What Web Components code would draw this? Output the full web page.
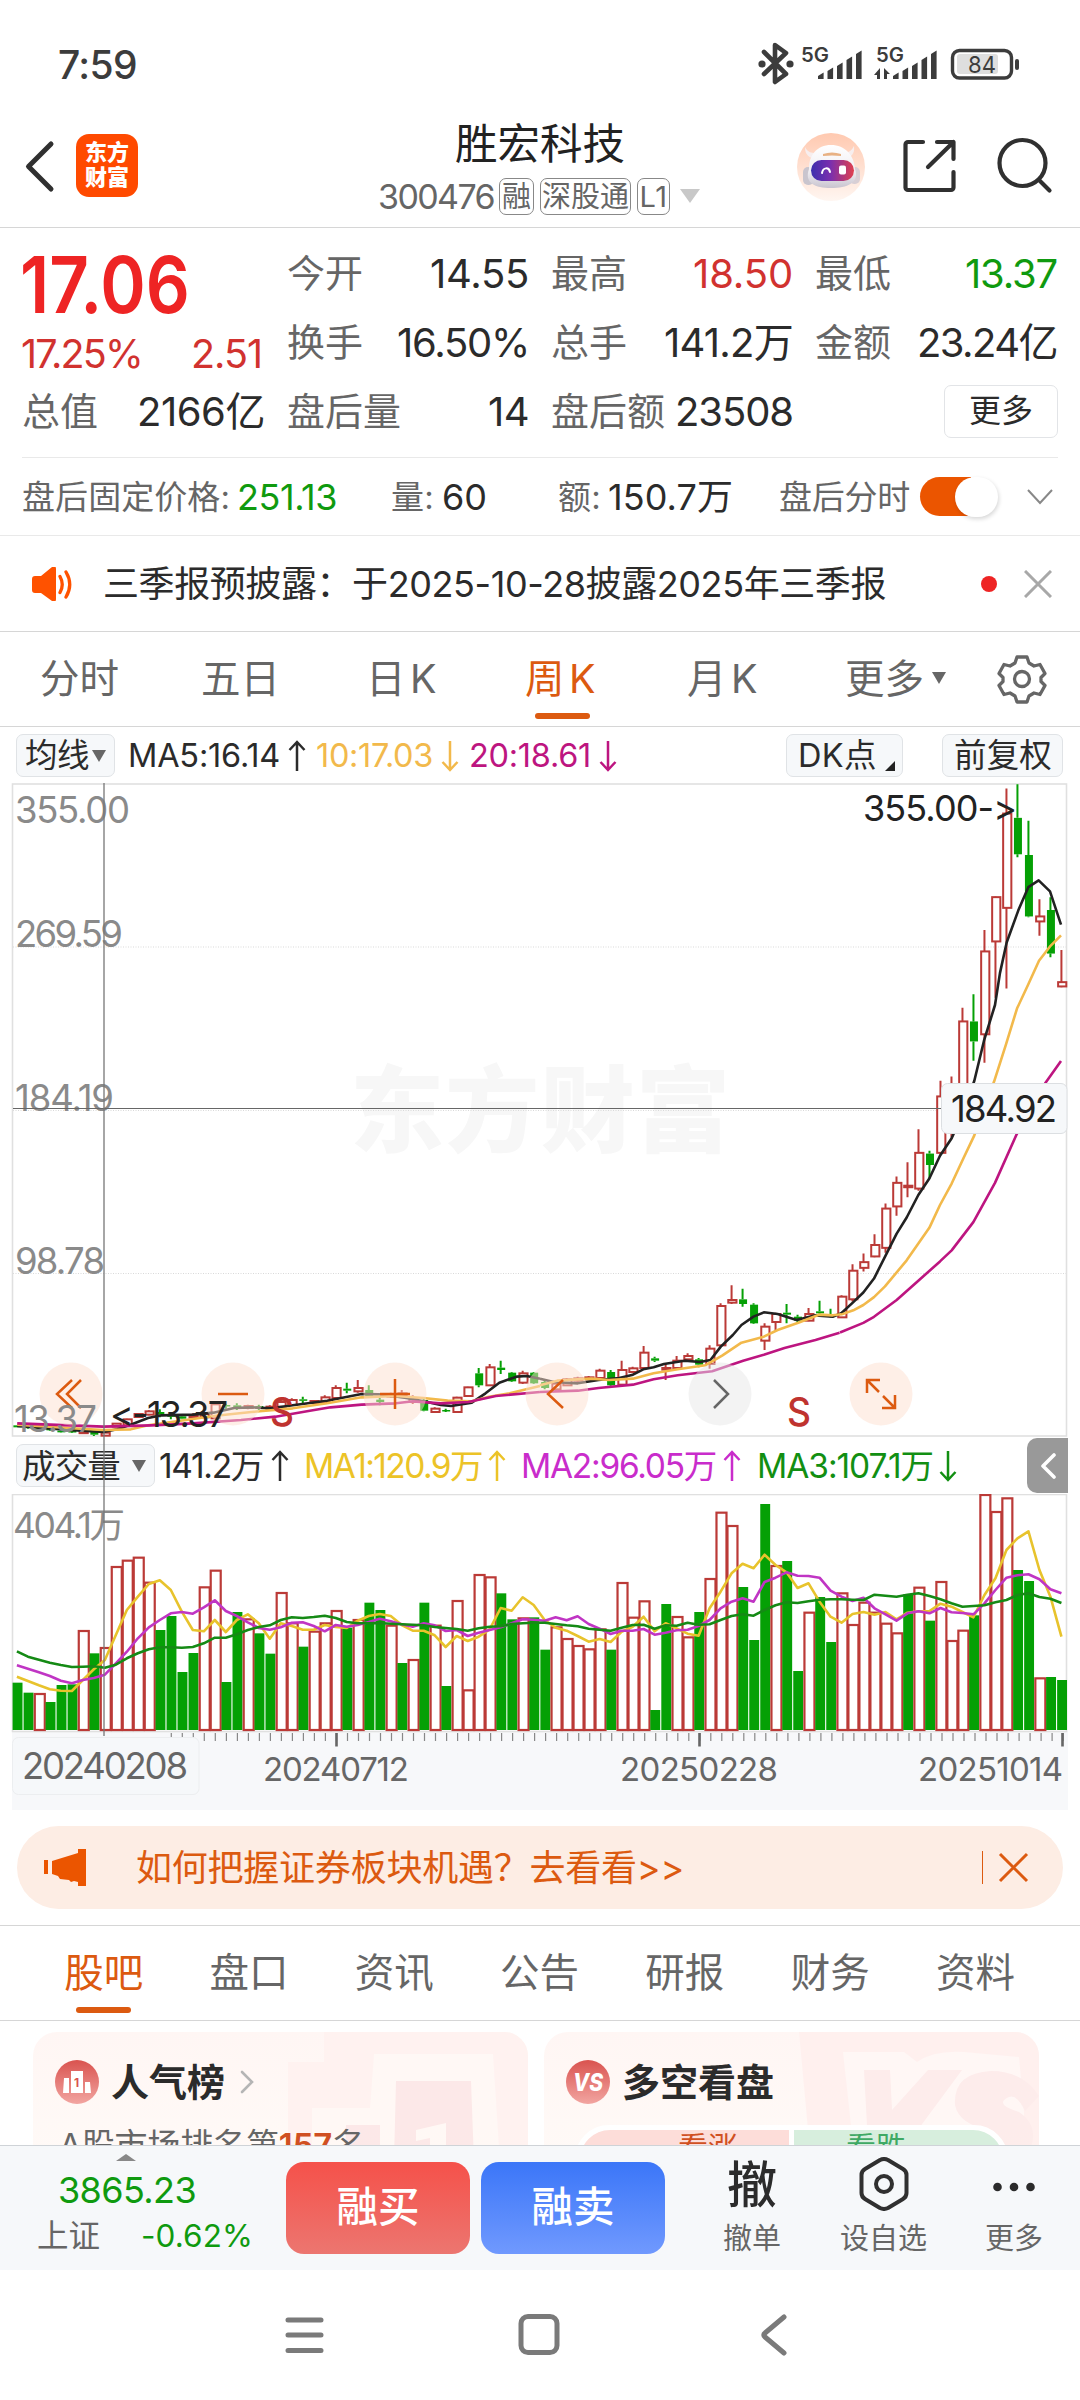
<!DOCTYPE html>
<html lang="zh-CN">
<head>
<meta charset="utf-8">
<title>胜宏科技 300476</title>
<style>
    body {
        margin: 0;
        width: 1080px;
        height: 2400px;
        overflow: hidden;
        background: #fff;
        color: #2b2b2b;
        font-family: Inter, "Noto Sans CJK SC", sans-serif;
    }
</style>
</head>
<body>
<stock-app></stock-app>

<script>
// Shared base: renders the template of a class into its shadow root
class BaseElement extends HTMLElement {
    constructor() {
        super();
        this.attachShadow({ mode: 'open' });
    }

    connectedCallback() {
        this.shadowRoot.innerHTML = `<style>
            * { box-sizing: border-box; }
            svg { display: block; flex: none; }
            ${this.styles()}
        </style>${this.render()}`;
    }

    styles() { return ''; }
    render() { return ''; }
}

class StatusBar extends BaseElement {
    styles() {
        return `
            :host { display: flex; justify-content: space-between; height: 105px; padding: 0 60px 0 58px; color: #3c3c3c; }
            .time { font-size: 39px; line-height: 129px; font-weight: 500; }
            svg { margin-top: 35px; }
        `;
    }

    bars(x) {
        return [6, 11, 16, 22, 28].map((h, i) =>
            `<path d="M${x + i * 9.5} 44V${44 - h + 3}l5.6-3.4V44z"/>`).join('');
    }

    render() {
        return `
            <fit-text class="time" w="79">7:59</fit-text>
            <svg width="266" height="54" viewBox="754 35 266 54" fill="#3c3c3c">
                <path d="M764 52l22 22-11 8V45l11 8-22 21" fill="none" stroke="#3c3c3c" stroke-width="4.6" stroke-linejoin="round" stroke-linecap="round"/>
                <circle cx="762" cy="64" r="3.6"/><circle cx="790" cy="64" r="3.6"/>
                <text x="801" y="62" font-size="20" font-weight="600" textLength="28" lengthAdjust="spacingAndGlyphs">5G</text>
                <g transform="translate(0 35)">${this.bars(818)}${this.bars(893)}</g>
                <text x="876" y="62" font-size="20" font-weight="600" textLength="28" lengthAdjust="spacingAndGlyphs">5G</text>
                <path d="M880 68v11h-3v-4h-3zM884 79V68l6 6h-3v5z"/>
                <rect x="952.5" y="50.500" width="59" height="27.500" rx="7" fill="none" stroke="#3c3c3c" stroke-width="3.4"/>
                <rect x="957" y="54" width="41" height="20" rx="3" fill="#dedede"/>
                <rect x="1015" y="59" width="4" height="11" rx="2"/>
                <text x="968" y="73" font-size="23.5" textLength="28" lengthAdjust="spacingAndGlyphs">84</text>
            </svg>
        `;
    }
}

class NavHeader extends BaseElement {
    styles() {
        return `
            :host { display: flex; height: 123px; border-bottom: 1px solid #d6d6d6; }
            .back { margin: 32px 0 0 20px; }
            .logo {
                width: 62px; height: 63px; margin: 29px 0 0 16px; padding-top: 6px;
                border-radius: 13px; background: #ff4a00; color: #fff;
                font-size: 22px; line-height: 25px; font-weight: 900; text-align: center;
            }
            .title { width: 330px; margin-left: 232px; padding-top: 14px; }
            .name { display: block; margin-left: 85px; font-size: 42.500px; line-height: 50px; color: #222; }
            .meta { display: flex; align-items: center; margin-top: 7px; padding-left: 8px; height: 40px; color: #666; font-size: 34px; }
            .chip { display: flex; justify-content: center; height: 37px; border: 1.5px solid #888; border-radius: 7px; font-size: 29px; line-height: 35px; margin-left: 6px; }
            .tri { margin-left: 10px; border: 10px solid transparent; border-top: 14px solid #c8c8c8; border-bottom: 0; }
            .bot { margin: 27px 0 0 96px; }
            .share { margin: 32px 0 0 35px; }
            .find { margin: 32px 0 0 34px; }
        `;
    }

    render() {
        return `
            <svg class="back" width="40" height="56" viewBox="20 137 40 56" fill="none" stroke="#303030" stroke-width="5" stroke-linecap="round" stroke-linejoin="round"><path d="M51 144L28.500 166.500 51 189"/></svg>
            <div class="logo">东方<br>财富</div>
            <div class="title">
                <span class="name">胜宏科技</span>
                <div class="meta">
                    <fit-text w="116">300476</fit-text>
                    <span class="chip" style="width:35px;margin-left:5px">融</span>
                    <span class="chip" style="width:91px">深股通</span>
                    <span class="chip" style="width:33px"><fit-text w="28">L1</fit-text></span>
                    <i class="tri"></i>
                </div>
            </div>
            <svg class="bot" width="70" height="70" viewBox="0 0 70 70">
                <defs>
                    <linearGradient id="sky" x2="0" y2="1"><stop stop-color="#ffc9b0"/><stop offset="1" stop-color="#fff6f1"/></linearGradient>
                    <linearGradient id="visor"><stop stop-color="#3c2fae"/><stop offset=".45" stop-color="#7a2fae"/><stop offset="1" stop-color="#e0404e"/></linearGradient>
                    <linearGradient id="helmet" x2="0" y2="1"><stop stop-color="#fff"/><stop offset=".6" stop-color="#f0eef2"/><stop offset="1" stop-color="#c9c4cf"/></linearGradient>
                </defs>
                <circle cx="35" cy="35" r="34" fill="url(#sky)"/>
                <path d="M9 15c0 8 4 10 9 12l5-7c-6 2-11 1-14-5zM58 14c1 8-3 11-8 13l-5-7c6 2 10 0 13-6z" fill="#f7eeee"/>
                <rect x="7" y="35" width="11" height="18" rx="5" fill="#c9c5ce"/><rect x="53" y="35" width="11" height="17" rx="5" fill="#d8cfd5"/>
                <path d="M13 37c0-14 8-24 22-24s23 10 24 24c5 14-8 19-24 19s-27-5-22-19z" fill="url(#helmet)"/>
                <path d="M27 22q9-3 18 0v2q-9-1-18 0z" fill="#e8b183"/>
                <rect x="15" y="28" width="43" height="21" rx="10.500" fill="url(#visor)"/>
                <path d="M26 41c1-6 7-6 8-1" stroke="#fff" stroke-width="2" fill="none" stroke-linecap="round"/>
                <rect x="43" y="33.500" width="7" height="9" rx="2" fill="#fff"/>
            </svg>
            <svg class="share" width="60" height="60" viewBox="901 137 60 60" fill="none" stroke="#303030" stroke-width="4.2" stroke-linecap="round" stroke-linejoin="round">
                <path d="M923 142h-15a2.500 2.500 0 0 0-2.500 2.500v43a2.500 2.500 0 0 0 2.500 2.500h43a2.500 2.500 0 0 0 2.500-2.500V172M937 142h16.500v17M953.500 142L928 167"/>
            </svg>
            <svg class="find" width="60" height="60" viewBox="995 137 60 60" fill="none" stroke="#303030" stroke-width="4.2" stroke-linecap="round"><circle cx="1022.500" cy="163" r="23"/><path d="M1040 181l9.500 9.500"/></svg>
        `;
    }
}

// One label / value pair of the quote grid
class QuoteCell extends BaseElement {
    styles() {
        return `
            :host { display: flex; justify-content: space-between; height: 69px; font-size: 38px; line-height: 69px; color: #666; white-space: nowrap; }
            span { margin-left: -2px; }
            fit-text { font-size: 40px; color: ${this.getAttribute('color') || '#2b2b2b'}; }
        `;
    }

    render() {
        return `<span>${this.getAttribute('label')}</span><fit-text w="${this.getAttribute('w')}">${this.getAttribute('value')}</fit-text>`;
    }
}

class QuotePanel extends BaseElement {
    styles() {
        return `
            :host { display: block; height: 308px; border-bottom: 1px solid #e9e9e9; }
            .grid { display: flex; justify-content: space-between; height: 230px; margin: 0 22px; padding: 11px 1px 0 2px; border-bottom: 1px solid #e9e9e9; }
            .col { width: 240px; }
            .lead { width: 241px; }
            .price { display: block; height: 90px; margin-left: -4px; color: #ee2424; font-size: 79px; line-height: 90px; font-weight: 600; }
            .change { display: flex; justify-content: space-between; height: 48px; margin: 0 3px 0 -3px; color: #d1322f; font-size: 39.500px; line-height: 50px; }
            .more { width: 114px; height: 53px; margin: 8px -1px 0 auto; border: 1px solid #e2e4e7; border-radius: 7px; font-size: 32px; line-height: 50px; text-align: center; color: #2b2b2b; }
            .after { display: flex; height: 77px; align-items: center; padding: 0 26px 0 22px; font-size: 33px; line-height: 50px; color: #666; white-space: nowrap; }
            .after .num { font-size: 36px; color: #2b2b2b; }
            .switch { width: 78px; height: 39px; margin: 0 29px 0 10px; border-radius: 20px; background: linear-gradient(90deg, #eb5500 65%, #fff 66%); }
            .switch i { display: block; width: 43px; height: 40px; margin-left: 35px; border-radius: 20px; background: #fff; box-shadow: 1px 2px 4px rgba(0, 0, 0, .16); }
        `;
    }

    render() {
        return `
            <div class="grid">
                <div class="lead">
                    <fit-text class="price" w="170" squeeze>17.06</fit-text>
                    <div class="change"><fit-text w="121">17.25%</fit-text><fit-text w="71">2.51</fit-text></div>
                    <quote-cell label="总值" value="2166亿" w="128"></quote-cell>
                </div>
                <div class="col">
                    <quote-cell label="今开" value="14.55" w="99"></quote-cell>
                    <quote-cell label="换手" value="16.50%" w="132"></quote-cell>
                    <quote-cell label="盘后量" value="14" w="41"></quote-cell>
                </div>
                <div class="col">
                    <quote-cell label="最高" value="18.50" w="100" color="#d1322f"></quote-cell>
                    <quote-cell label="总手" value="141.2万" w="129"></quote-cell>
                    <quote-cell label="盘后额" value="23508" w="118"></quote-cell>
                </div>
                <div class="col">
                    <quote-cell label="最低" value="13.37" w="92" color="#0f9a0f"></quote-cell>
                    <quote-cell label="金额" value="23.24亿" w="140"></quote-cell>
                    <div class="more">更多</div>
                </div>
            </div>
            <div class="after">
                <fit-text w="208">盘后固定价格:</fit-text>
                <fit-text class="num" w="100" style="margin-left:7px;color:#0f9a0f">251.13</fit-text>
                <fit-text w="43" style="margin-left:54px">量:</fit-text>
                <fit-text class="num" w="45" style="margin-left:8px">60</fit-text>
                <fit-text w="43" style="margin-left:71px">额:</fit-text>
                <fit-text class="num" w="125" style="margin-left:7px">150.7万</fit-text>
                <fit-text w="131" style="margin-left:46px">盘后分时</fit-text>
                <div class="switch"><i></i></div>
                <svg width="26" height="20" viewBox="0 0 26 20" fill="none" stroke="#888" stroke-width="2"><path d="M1 3l12 13L25 3"/></svg>
            </div>
        `;
    }
}

class NoticeBar extends BaseElement {
    styles() {
        return `
            :host { display: flex; align-items: center; height: 96px; border-bottom: 1px solid #d6d6d6; padding: 0 28px 0 31px; font-size: 36px; line-height: 60px; color: #2b2b2b; }
            .dot { width: 16px; height: 16px; border-radius: 50%; background: #ee2424; margin: 0 27px 0 95px; }
        `;
    }

    render() {
        return `
            <svg width="42" height="34" viewBox="31 566 42 34">
                <path d="M32 578q0-3 3-3h6l11-9q4-2 4 2v30q0 4-4 2l-11-8h-6q-3 0-3-3z" fill="#ff5200"/>
                <path d="M60 575.500q4.500 8 0 16M66 571q7.500 12.500 0 25" fill="none" stroke="#ff5200" stroke-width="3.300" stroke-linecap="round"/>
            </svg>
            <fit-text w="783" style="margin-left:30px">三季报预披露：于2025-10-28披露2025年三季报</fit-text>
            <i class="dot"></i>
            <svg width="28" height="28" viewBox="0 0 28 28" stroke="#a8a8a8" stroke-width="3"><path d="M1 1l26 26M27 1L1 27"/></svg>
        `;
    }
}

class TabItem extends BaseElement {
    styles() {
        const on = this.hasAttribute('active');
        return `
            :host { display: flex; flex-direction: column; align-items: center; width: var(--tab-width, auto); height: 94px; font-size: 39.500px; line-height: 95px; color: ${on ? '#dc5a10' : '#666'}; white-space: nowrap; }
            i { display: ${on ? 'block' : 'none'}; width: 55px; height: 6px; margin-top: -14px; border-radius: 3px; background: #dc5a10; }
        `;
    }

    render() { return '<span><slot></slot></span><i></i>'; }
}

class PeriodTabs extends BaseElement {
    styles() {
        return `
            :host { display: flex; height: 95px; border-bottom: 1px solid #d6d6d6; padding-left: 40px; }
            .caret { margin-top: 40px; border: 7px solid transparent; border-top: 12px solid #666; border-bottom: 0; }
        `;
    }

    render() {
        return `
            <tab-item>分时</tab-item>
            <tab-item style="margin-left:82px">五日</tab-item>
            <tab-item style="margin-left:86px"><fit-text w="75">日K</fit-text></tab-item>
            <tab-item style="margin-left:84px" active><fit-text w="75">周K</fit-text></tab-item>
            <tab-item style="margin-left:87px"><fit-text w="75">月K</fit-text></tab-item>
            <tab-item style="margin-left:83px">更多</tab-item>
            <i class="caret" style="margin-left:8px"></i>
            <svg style="margin:22px 0 0 50px" width="52" height="50" viewBox="-26 -25 52 50" fill="none" stroke="#666" stroke-width="3.300" stroke-linejoin="round">
                <path d="M-5-22h10l2 6 5 3 6-1.500 5 9-4 4v4l4 4-5 9-6-1.500-5 3-2 6h-10l-2-6-5-3-6 1.500-5-9 4-4v-4l-4-4 5-9 6 1.500 5-3z"/><circle r="7.500"/>
            </svg>
        `;
    }
}

class IndicatorBar extends BaseElement {
    styles() {
        return `
            :host { display: flex; align-items: center; height: 56px; padding: 1px 17px 0 16px; font-size: 32.500px; line-height: 40px; white-space: nowrap; }
            .btn { display: flex; align-items: center; height: 43px; border: 1.500px solid #e0e3e6; border-radius: 7px; background: #f6f8fa; }
            .caret { margin-left: 3px; border: 7px solid transparent; border-top: 12px solid #666; border-bottom: 0; }
            .corner { align-self: flex-end; margin: 0 0 5px 8px; border: 5.500px solid #222; border-top-color: transparent; border-left-color: transparent; }
        `;
    }

    render() {
        return `
            <div class="btn" style="width:99px;padding-left:8px"><fit-text w="64">均线</fit-text><i class="caret"></i></div>
            <fit-text w="152" style="margin-left:13px">MA5:16.14</fit-text><arrow-mark></arrow-mark>
            <fit-text w="117" style="margin-left:10px;color:#f2b94b">10:17.03</fit-text><arrow-mark down style="color:#f2b94b"></arrow-mark>
            <fit-text w="122" style="margin-left:10px;color:#bd1580">20:18.61</fit-text><arrow-mark down style="color:#bd1580"></arrow-mark>
            <div class="btn" style="width:117px;margin-left:auto;padding-left:11px"><fit-text w="79">DK点</fit-text><i class="corner"></i></div>
            <div class="btn" style="width:121px;margin-left:39px;padding-left:11px"><fit-text w="98">前复权</fit-text></div>
        `;
    }
}

class ArrowMark extends BaseElement {
    styles() {
        return `:host { display: inline-block; margin-left: 8px; } svg { transform: ${this.hasAttribute('down') ? 'scaleY(-1)' : 'none'}; }`;
    }

    render() {
        return '<svg width="18" height="32" viewBox="0 0 18 32" fill="none" stroke="currentColor" stroke-width="2.500"><path d="M9 31V2M1.500 10L9 2l7.500 8"/></svg>';
    }
}

const RED = '#bb3a37';
const GREEN = '#05a005';
const PITCH = 10.995;
const barX = i => 17.4 + i * PITCH;

// [high, top, bottom, low] of each body, in steps of its own range; negative high marks a fall
const LOW_CANDLES = [
    [-436,436,442,442],[-440,440,444,446],[-444,444,448,448],[-446,446,451,453],[-452,452,457,458],[-452,453,457,459],[455,455,458,460],[-454,456,464,468],
    [450,458,467,467],[429,431,440,441],[416,418,436,438],[400,402,411,412],[391,394,404,406],[-388,396,404,412],[-400,406,410,418],[-404,409,416,418],
    [400,408,412,414],[396,402,412,414],[368,373,415,416],[-372,375,379,386],[-370,376,384,390],[374,378,384,388],[-374,378,387,390],[376,380,386,388],
    [360,366,380,384],[355,360,375,378],[-350,358,362,370],[360,363,369,371],[346,352,366,372],[316,324,354,358],[-308,326,332,340],[300,324,334,338],
    [-316,330,350,352],[-354,359,366,376],[338,342,350,354],[330,340,346,354],[346,354,366,372],[-354,360,392,394],[382,386,396,398],[-386,390,393,396],
    [350,353,396,398],[320,322,348,350],[-264,280,316,322],[252,262,316,318],[-242,263,270,282],[-276,278,304,306],[272,280,308,312],[-276,278,310,312],
    [-300,306,324,328],[306,311,328,332],[294,298,316,318],[290,295,302,305],[288,292,298,300],[266,272,294,298],[-270,276,316,318],[242,270,314,318],
    [260,265,276,280],[198,218,264,268],[-230,235,242,246],[250,264,269,300],[228,242,264,268],[220,228,238,242],[-234,238,254,262],[196,206,252,266],
    [70,78,196,198],[16,60,68,72],[-26,58,72,80],[-70,74,130,132],[130,140,182,210],[98,102,126,152],[-72,98,104,130],[-104,110,122,126],
    [84,102,122,124],[-62,94,100,106],[-86,103,108,112],[46,50,112,114],
];
const HIGH_CANDLES = [
    [1356,1374,1454,1460],[1326,1350,1366,1376],[1272,1302,1334,1336],[1186,1200,1310,1324],[1110,1128,1194,1220],[1070,1136,1138,1168],[978,1044,1144,1150],
    [-1038,1046,1078,1116],[842,886,1044,1048],[830,860,940,1000],[638,676,860,862],[-600,676,732,786],[420,480,712,792],[326,328,452,610],
    [24,94,358,584],[-12,106,208,216],[-114,210,382,384],[334,382,396,436],[-328,364,486,496],[476,566,578,580],
];

class PriceChart extends BaseElement {
    styles() {
        return `
            :host { display: block; height: 654px; }
            .line path { fill: none; stroke-width: 2.600; stroke-linejoin: round; vector-effect: non-scaling-stroke; }
            .axis { font-size: 36.500px; fill: #8a8a8a; }
            .mark { font-size: 36px; fill: #222; font-feature-settings: "calt" 0; }
        `;
    }

    candle([high, top, bottom, low], i, offset, step) {
        const up = high >= 0;
        const y = v => offset + Math.abs(v) * step;
        const x = barX(i);
        const color = up ? RED : GREEN;
        const wick = `<path d="M${x - .5} ${y(high)}V${y(top)}M${x - .5} ${y(bottom)}V${y(low)}" stroke="${color}" stroke-width="2"/>`;
        const height = Math.max(y(bottom) - y(top), 1.5);
        return wick + (up
            ? `<rect x="${x - 3.8}" y="${y(top)}" width="8.200" height="${height}" fill="#fff" stroke="${color}" stroke-width="2"/>`
            : `<rect x="${x - 4}" y="${y(top)}" width="8" height="${height}" fill="${color}"/>`);
    }

    // Each average is drawn in three stretches, left to right
    average(color, left, middle, right) {
        return `<g class="line" stroke="${color}">
            <path transform="translate(0 1280) scale(.34435 .33333)" d="M${left}"/>
            <path transform="translate(540 1280) scale(.34435 .33333)" d="M${middle}"/>
            <path transform="translate(640 780) scale(.33333 .35714)" d="M${right}"/>
        </g>`;
    }

    button(x, icon, gray) {
        return `<g transform="translate(${x} 1394)"><circle r="31.500" fill="${gray ? '#e8e8e8' : '#fde0d0'}" opacity=".5"/>
            <path d="${icon}" fill="none" stroke="${gray ? '#666' : '#dc5a10'}" stroke-width="2.500"/></g>`;
    }

    render() {
        return `
            <svg width="1080" height="654" viewBox="0 783 1080 654">
                <text x="350" y="1145" font-size="94" font-weight="900" fill="#f7f7f7" textLength="380">东方财富</text>
                <path d="M13 947h1054M13 1110.500h1054M13 1273.500h1054" stroke="#d9d9d9" stroke-dasharray="1 1.500"/>
                <rect x="12.500" y="784" width="1054" height="652" fill="none" stroke="#e0e0e0" stroke-width="1.600"/>
                ${LOW_CANDLES.map((c, i) => this.candle(c, i, 1280, 1 / 3)).join('')}
                ${HIGH_CANDLES.map((c, i) => this.candle(c, i + 76, 780, 1 / 2.8)).join('')}
                ${this.average('#222',
                    '50 438 200 450 300 456 340 448 385 432 430 414 470 406 560 404 620 398 680 384 730 382 790 385 850 376 950 362 1050 342 1100 343 1180 354 1230 364 1280 375 1310 378 1370 368 1410 340 1450 308 1500 290 1530 288 1568 296',
                    '0 296 40 306 110 310 170 300 230 294 270 284 300 268 330 262 360 252 420 242 465 246 495 240 525 200 560 165 585 135 620 110 650 97 690 102 745 120 800 106 850 110 875 100',
                    '603 1494 640 1462 670 1435 702 1396 770 1270 800 1225 835 1162 868 1116 900 1052 935 1003 970 930 1003 842 1032 730 1065 630 1080 540 1100 455 1135 365 1165 300 1196 281 1230 312 1263 405')}
                ${this.average('#f2b94b',
                    '50 434 200 444 300 450 380 448 430 436 540 420 620 408 730 396 850 385 950 370 1050 352 1150 348 1230 354 1300 362 1370 364 1420 350 1480 340 1568 318',
                    '0 316 50 302 110 298 150 296 200 300 270 296 330 280 400 268 480 256 530 226 585 188 650 170 690 150 750 128 810 104 850 106 875 103',
                    '603 1497 640 1485 670 1470 702 1448 735 1418 800 1345 868 1254 900 1190 935 1130 970 1060 1003 995 1062 845 1098 740 1131 640 1165 572 1197 506 1230 466 1263 435')}
                ${this.average('#bd1580',
                    '50 430 300 440 440 436 560 430 700 420 800 410 900 392 960 382 1050 374 1150 370 1200 364 1280 370 1360 366 1440 348 1568 336',
                    '0 336 110 332 170 324 270 314 330 298 400 286 500 274 590 242 650 224 710 204 800 180 870 158',
                    '600 1547 670 1520 702 1503 770 1456 835 1402 900 1348 935 1317 1000 1238 1065 1128 1130 992 1215 850 1263 787')}
                ${this.button(71, 'M1-14L-14 0L1 14M10-14L-4 0L10 14')}
                ${this.button(233, 'M-15 0H15')}
                ${this.button(395, 'M-15 0H15M0-15V15')}
                ${this.button(557, 'M6-14L-9 0L6 14')}
                ${this.button(720, 'M-6-14L8 0L-6 14', true)}
                ${this.button(881, 'M-14-1V-14H-1M-14-14L-2-2M14 1V14H1M14 14L2 2')}
                <g class="axis">
                    <text x="15" y="823" textLength="115">355.00</text>
                    <text x="15" y="946.500" textLength="108">269.59</text>
                    <text x="15" y="1110.500" textLength="99">184.19</text>
                    <text x="15" y="1273.500" textLength="90">98.78</text>
                    <text x="14" y="1432" textLength="83">13.37</text>
                </g>
                <g class="mark">
                    <text x="110" y="1427" textLength="118">&lt;-13.37</text>
                    <text x="863" y="820.500" textLength="154">355.00-&gt;</text>
                </g>
                <g fill="#bf332f" font-size="39" font-weight="500">
                    <text x="270" y="1426" textLength="24" lengthAdjust="spacingAndGlyphs">S</text>
                    <text x="787" y="1426" textLength="24" lengthAdjust="spacingAndGlyphs">S</text>
                </g>
                <path d="M13 1108.500H942" stroke="#666" stroke-width="1.200"/>
                <rect x="941.500" y="1083.500" width="125.500" height="50" rx="6" fill="#f6f8fa" stroke="#dcdfe2"/>
                <text x="951" y="1122" font-size="36.500" fill="#222" textLength="106">184.92</text>
            </svg>
        `;
    }
}

class VolumeBar extends BaseElement {
    styles() {
        return `
            :host { display: flex; align-items: center; height: 57px; padding-left: 16px; font-size: 33.500px; line-height: 42px; white-space: nowrap; }
            .btn { display: flex; align-items: center; width: 139px; height: 43px; padding-left: 5px; border: 1.500px solid #e0e3e6; border-radius: 7px; background: #f6f8fa; }
            .caret { margin-left: 12px; border: 7px solid transparent; border-top: 12px solid #666; border-bottom: 0; }
            .fold { display: flex; align-items: center; justify-content: center; width: 41px; height: 55px; margin: 0 12px 0 auto; border-radius: 10px 0 0 10px; background: #999; }
        `;
    }

    render() {
        return `
            <div class="btn"><fit-text w="98">成交量</fit-text><i class="caret"></i></div>
            <fit-text w="104" style="margin-left:4px">141.2万</fit-text><arrow-mark></arrow-mark>
            <fit-text w="178" style="margin-left:15px;color:#ecc327">MA1:120.9万</fit-text><arrow-mark style="margin-left:6px;color:#ecc327"></arrow-mark>
            <fit-text w="195" style="margin-left:15px;color:#c92ccb">MA2:96.05万</fit-text><arrow-mark style="margin-left:7px;color:#c92ccb"></arrow-mark>
            <fit-text w="176" style="margin-left:16px;color:#128f12">MA3:107.1万</fit-text><arrow-mark down style="margin-left:6px;color:#128f12"></arrow-mark>
            <div class="fold"><svg width="16" height="26" viewBox="0 0 16 26" fill="none" stroke="#fff" stroke-width="3.600" stroke-linecap="round" stroke-linejoin="round"><path d="M14 2L3 13l11 11"/></svg></div>
        `;
    }
}

// Tops of the volume columns in thirds of a pixel; negative marks a falling week
const VOLUME = [
    -1208,-1238,1242,-1266,-1215,-1213,1053,-1120,1104,861,842,833,908,-1050,-1008,-1176,-1119,922,872,-1206,-996,1018,-1060,-1121,
    939,1030,-1100,1055,1030,993,-1043,1020,-968,-990,1037,-1149,1140,-968,1037,-1218,963,1231,885,892,-940,-1018,1015,-1012,
    -1109,1042,1077,1098,1108,1048,-1109,909,1013,964,-1290,-972,1011,1072,-996,897,698,738,-921,-1080,-672,858,-843,-1173,
    998,-951,-1086,940,1035,968,998,1031,1060,-943,923,-1022,906,1083,1052,-1006,645,696,655,-870,-903,1195,-1191,-1200,
];
const VOLUME_MA1 = [
    1190,1203,1216,1228,1232,1233,1200,1168,1140,1065,990,950,912,901,930,995,1050,1054,1020,1056,1020,1003,1030,1076,
    1030,1038,1049,1049,1035,1041,1044,1022,1008,1002,1008,1035,1052,1052,1066,1101,1068,1083,1070,1048,984,992,952,975,
    1020,1043,1052,1068,1085,1077,1086,1055,1040,1010,1054,1030,1045,1061,1067,985,935,880,851,865,824,855,877,924,
    910,965,1010,1028,1002,996,1004,996,1018,998,994,993,971,980,996,1012,945,895,810,775,754,870,950,1070,
];
const VOLUME_MA2 = [
    1156,1166,1177,1188,1202,1210,1200,1194,1184,1150,1115,1075,1042,1020,1000,996,1001,982,961,993,1008,1027,1044,1049,
    1042,1028,1027,1038,1054,1035,1040,1035,1026,1016,1024,1033,1040,1030,1036,1053,1050,1068,1058,1050,1042,1030,1018,1019,
    1022,1012,1021,1009,1032,1046,1062,1052,1052,1047,1064,1058,1051,1049,1038,1020,985,965,955,965,906,893,877,887,
    888,893,932,950,963,953,985,1003,1022,1000,994,1000,984,997,999,1003,970,930,893,886,883,898,928,940,
];
const VOLUME_MA3 = [
    1114,1130,1139,1148,1155,1161,1160,1159,1163,1154,1135,1120,1108,1102,1102,1103,1101,1090,1073,1073,1063,1050,1041,1036,
    1020,1012,1014,1011,1007,1014,1026,1030,1030,1029,1031,1033,1034,1036,1041,1044,1047,1052,1045,1040,1039,1032,1030,1028,
    1028,1032,1036,1039,1046,1049,1052,1043,1035,1034,1046,1036,1037,1028,1034,1033,1020,1008,1003,1007,990,976,967,969,
    964,959,958,958,959,960,944,947,950,944,940,948,958,970,980,978,976,967,960,945,940,951,956,969,
];

class VolumeChart extends BaseElement {
    styles() {
        return ':host { display: block; height: 316px; }';
    }

    column(v, i) {
        const y = 1280 + Math.abs(v) / 3;
        const x = barX(i);
        return v < 0
            ? `<rect x="${x - 4.8}" y="${y}" width="9.900" height="${1730 - y}" fill="${GREEN}"/>`
            : `<rect x="${x - 4.6}" y="${y}" width="10" height="${1730 - y}" fill="#fff" stroke="${RED}" stroke-width="2.200"/>`;
    }

    average(values, color) {
        const points = values.map((v, i) => `${barX(i) - .5},${(1280 + v / 3).toFixed(1)}`).join(' ');
        return `<polyline points="${points}" fill="none" stroke="${color}" stroke-width="2.600" stroke-linejoin="round"/>`;
    }

    ticks() {
        let d = '';
        for (let i = 14; i < 96; i++) d += `M${(171.3 + (i - 14) * 11.01).toFixed(1)} 1733v8`;
        return d;
    }

    render() {
        return `
            <svg width="1080" height="316" viewBox="0 1494 1080 316">
                <rect x="12" y="1731" width="1056" height="79" fill="#f7f8fa"/>
                <rect x="12.500" y="1494.500" width="1054" height="237" fill="none" stroke="#e0e0e0" stroke-width="1.600"/>
                <text x="13" y="1538" font-size="35.500" fill="#8a8a8a" textLength="112">404.1万</text>
                ${VOLUME.map((v, i) => this.column(v, i)).join('')}
                ${this.average(VOLUME_MA1, '#e8c32c')}
                ${this.average(VOLUME_MA2, '#c035c4')}
                ${this.average(VOLUME_MA3, '#158a15')}
                <path d="${this.ticks()}" stroke="#888" stroke-width="1.200"/>
                <path d="M336.500 1733v13.500M699.500 1733v13.500M1062.500 1733v13.500" stroke="#666" stroke-width="2.600"/>
                <rect x="12.500" y="1737.500" width="186.500" height="57" rx="6" fill="#f6f8fa" stroke="#eceef0"/>
                <text x="22" y="1779" font-size="36.500" fill="#666" textLength="166">20240208</text>
                <g font-size="33" fill="#666">
                    <text x="263" y="1780.500" textLength="146">20240712</text>
                    <text x="620" y="1780.500" textLength="158">20250228</text>
                    <text x="918" y="1780.500" textLength="145">20251014</text>
                </g>
            </svg>
        `;
    }
}

class ChartArea extends BaseElement {
    // The crosshair runs over all the rows of the chart
    styles() {
        return `
            :host { display: block; position: relative; }
            .cross { position: absolute; left: 103px; top: 0; width: 2px; height: 953px; background: #777; opacity: .65; }
        `;
    }

    render() {
        return '<price-chart></price-chart><volume-bar></volume-bar><volume-chart></volume-chart><i class="cross"></i>';
    }
}

class PromoBanner extends BaseElement {
    styles() {
        return `
            :host { display: flex; align-items: center; height: 83px; margin: 16px 17px; padding: 0 34px 0 27px; border-radius: 42px; background: #fdede4; font-size: 36px; line-height: 60px; color: #dc5a10; white-space: nowrap; }
            .rule { width: 1px; height: 33px; margin: 0 15px 0 auto; background: #dc5a10; }
        `;
    }

    render() {
        return `
            <svg width="44" height="37" viewBox="44 1849 44 37" fill="#eb5500"><path d="M44 1860h4v14h-4zM52 1861l26-8v-4h8v37h-8v-4l-4-1-3 1-2-2-9-1-2-3-6-2z"/></svg>
            <fit-text w="548" style="margin-left:48px">如何把握证券板块机遇？去看看&gt;&gt;</fit-text>
            <i class="rule"></i>
            <svg width="31" height="31" viewBox="0 0 31 31" stroke="#dc5a10" stroke-width="3"><path d="M2 2l27 27M29 2L2 29"/></svg>
        `;
    }
}

class SectionTabs extends BaseElement {
    styles() {
        return `
            :host { display: flex; height: 96px; border-top: 1px solid #d6d6d6; border-bottom: 1px solid #d6d6d6; padding-left: 31px; }
            tab-item { --tab-width: 145.300px; }
        `;
    }

    render() {
        return ['股吧', '盘口', '资讯', '公告', '研报', '财务', '资料']
            .map((t, i) => `<tab-item ${i ? '' : 'active'}>${t}</tab-item>`).join('');
    }
}

class InfoCard extends BaseElement {
    styles() {
        return `
            :host { display: block; position: relative; width: 495px; height: 130px; border-radius: 24px 24px 0 0; background: linear-gradient(#fff6f4, #fffaf7); overflow: hidden; }
            .art { position: absolute; right: 0; top: 0; opacity: .85; }
            .head { position: relative; display: flex; align-items: center; padding: 28px 0 0 22px; height: 72px; font-size: 38px; font-weight: 600; color: #2b2b2b; }
            .head span { margin-left: 12px; line-height: 44px; }
            .head svg:last-child { margin-left: 15px; }
            .body { position: relative; }
        `;
    }

    render() {
        const vs = this.hasAttribute('versus');
        const art = vs
            ? '<path d="M0 0H240V130H12z" fill="#ffefed"/><path d="M44 20H105L118 30Q135 18 165 20L220 25L225 80V130H56z" fill="#fff7f5"/><path d="M65 38h26l2 40 36-40h34l-68 92H70zM240 64q-16-25-48-25-38 2-36 34 4 20 36 25 16 8 2 32h30q22-32-4-50-26-8-10-15 8-3 16 14z" fill="#fdeae9"/>'
            : '<path d="M36 0H240V130H-10V30H36z" fill="#fff1ef"/><path d="M86 22H205L212 130H24V76H82z" fill="#fff8f5"/><path d="M108 49h75l3 81h-80zM58 93h34v37H57z" fill="#fce6e5"/><path d="M128 98l30-7v39h-16v-24l-14 3z" fill="#fff8f5"/>';
        const badge = vs
            ? '<text x="7" y="31" font-size="24" font-weight="800" font-style="italic" fill="#fff" textLength="30" lengthAdjust="spacingAndGlyphs">VS</text>'
            : '<path d="M9 18h5v15H8zM16 11h12v22H16zM30 22h5l1 11h-6z" fill="#fff"/><text x="19" y="27" font-size="12" font-weight="700" fill="#d9534f">1</text>';
        return `
            <svg class="art" width="240" height="130" viewBox="0 0 240 130">${art}</svg>
            <div class="head">
                <svg width="44" height="44" viewBox="0 0 44 44">
                    <defs><linearGradient id="g" x2="0" y2="1"><stop stop-color="#d9534f"/><stop offset="1" stop-color="#f2a5a1"/></linearGradient></defs>
                    <circle cx="22" cy="22" r="22" fill="url(#g)"/>${badge}
                </svg>
                <span>${this.getAttribute('heading')}</span>
                ${vs ? '' : '<svg width="14" height="24" viewBox="0 0 14 24" fill="none" stroke="#b5b5b5" stroke-width="2.600" stroke-linecap="round"><path d="M2 2l10 10L2 22"/></svg>'}
            </div>
            <div class="body"><slot></slot></div>
        `;
    }
}

class VoteBar extends BaseElement {
    styles() {
        return `
            :host { display: flex; gap: 5px; width: 433px; height: 60px; margin: 21px 0 0 31px; border: 5px solid #fff; border-radius: 34px 34px 0 0; background: #fff; font-size: 30px; }
            div { flex: 1; display: flex; align-items: center; height: 55px; line-height: 44px; }
            .up { padding-left: 18px; border-radius: 30px 0 0 0; background: #fdddd9; color: #d05022; }
            .down { justify-content: flex-end; padding-right: 18px; border-radius: 0 30px 0 0; background: #d7eedd; color: #3fa964; }
            i { width: 44px; height: 44px; margin-top: 18px; border-radius: 50%; background: #fff; }
            .up span { margin: -22px 0 0 36px; }
            .down span { margin: -22px 35px 0 0; }
        `;
    }

    render() {
        return '<div class="up"><i></i><span>看涨</span></div><div class="down"><span>看跌</span><i></i></div>';
    }
}

class CardRow extends BaseElement {
    styles() {
        return `
            :host { display: flex; gap: 16px; height: 124px; padding: 11px 0 0 33px; overflow: hidden; }
            .rank { margin: 16px 0 0 26px; font-size: 33px; line-height: 50px; color: #666; white-space: nowrap; }
            b { color: #d05022; font-weight: 600; }
        `;
    }

    render() {
        return `
            <info-card heading="人气榜"><div class="rank"><fit-text w="306">A股市场排名第<b>157</b>名</fit-text></div></info-card>
            <info-card heading="多空看盘" versus><vote-bar></vote-bar></info-card>
        `;
    }
}

class TradeBar extends BaseElement {
    styles() {
        return `
            :host { display: flex; height: 125px; border-top: 1px solid #cfd3d7; background: #f6f8fa; white-space: nowrap; }
            .index { width: 232px; margin-left: 37px; color: #0f9a0f; }
            .tri { display: block; width: 0; margin: 8px 0 0 79px; border: 10px solid transparent; border-top: 0; border-bottom: 7px solid #888; }
            .value { display: block; margin-left: 21px; font-size: 36px; line-height: 58px; height: 53px; }
            .row { display: flex; justify-content: space-between; width: 216px; font-size: 31.500px; line-height: 44px; }
            .row span { color: #666; }
            .btn { width: 184px; height: 92px; margin: 16px 0 0 17px; border-radius: 18px; color: #fff; font-size: 41.500px; line-height: 90px; font-weight: 500; text-align: center; background: linear-gradient(#f5514a, #ec7670); }
            .sell { margin-left: 11px; background: linear-gradient(#3b76f8, #7099fe); }
            .act { display: flex; flex-direction: column; align-items: center; justify-content: flex-end; padding-bottom: 11px; font-size: 29px; line-height: 40px; color: #666; }
            .act svg { margin-bottom: 8px; }
            .big { color: #2b2b2b; font-size: 50px; line-height: 58px; font-weight: 500; margin-bottom: 5px; }
        `;
    }

    render() {
        return `
            <div class="index">
                <i class="tri"></i>
                <fit-text class="value" w="138">3865.23</fit-text>
                <div class="row"><span>上证</span><fit-text w="112">-0.62%</fit-text></div>
            </div>
            <div class="btn">融买</div>
            <div class="btn sell">融卖</div>
            <div class="act" style="margin-left:58px"><span class="big">撤</span>撤单</div>
            <div class="act" style="margin-left:59px">
                <svg width="50" height="54" viewBox="-25 -27 50 54" fill="none" stroke="#303030" stroke-width="4" stroke-linejoin="round"><path d="M-4-24q4-2 8 0L19-15q3.500 2 3.500 6V9q0 4-3.500 6L4 24q-4 2-8 0L-19 15q-3.500-2-3.500-6V-9q0-4 3.500-6z"/><circle r="8"/></svg>
                设自选
            </div>
            <div class="act" style="margin-left:58px">
                <svg width="46" height="54" viewBox="0 0 46 54" fill="#2b2b2b"><circle cx="6.500" cy="30" r="4.300"/><circle cx="23" cy="30" r="4.300"/><circle cx="39.500" cy="30" r="4.300"/></svg>
                更多
            </div>
        `;
    }
}

class SystemNav extends BaseElement {
    styles() {
        return ':host { display: flex; padding: 41px 0 0 281px; }';
    }

    render() {
        return `
            <svg width="510" height="48" viewBox="281 2311 510 48" fill="none" stroke="#7a7a7a" stroke-width="5" stroke-linecap="round" stroke-linejoin="round">
                <path d="M288 2320h33M288 2335h33M288 2350.500h33"/>
                <rect x="521" y="2316.500" width="36" height="36" rx="7"/>
                <path d="M784 2317l-19 16q-2.500 2 0 4l19 16"/>
            </svg>
        `;
    }
}

// Fits its text to the width given in "w": through letter spacing,
// or through narrower glyphs with "squeeze"
class FitText extends HTMLElement {
    constructor() {
        super();
        this.attachShadow({ mode: 'open' });
        this.shadowRoot.innerHTML = `
            <style>
                :host { display: inline-block; flex: none; white-space: nowrap; }
                span { display: inline-block; transform-origin: left; }
            </style>
            <span><slot></slot></span>
        `;
    }

    connectedCallback() {
        const width = Number(this.getAttribute('w'));
        const count = [...this.textContent.trim()].length;
        const span = this.shadowRoot.querySelector('span');
        const natural = span.getBoundingClientRect().width;
        if (this.hasAttribute('squeeze')) {
            span.style.transform = `scaleX(${(width / natural).toFixed(4)})`;
        } else {
            span.style.letterSpacing = `${((width - natural) / count).toFixed(3)}px`;
        }
        this.style.width = `${width}px`;
    }
}

class StockApp extends BaseElement {
    styles() {
        return ':host { display: block; }';
    }

    render() {
        return `
            <status-bar></status-bar>
            <nav-header></nav-header>
            <quote-panel></quote-panel>
            <notice-bar></notice-bar>
            <period-tabs></period-tabs>
            <indicator-bar></indicator-bar>
            <chart-area></chart-area>
            <promo-banner></promo-banner>
            <section-tabs></section-tabs>
            <card-row></card-row>
            <trade-bar></trade-bar>
            <system-nav></system-nav>
        `;
    }
}

customElements.define('stock-app', StockApp);
customElements.define('status-bar', StatusBar);
customElements.define('nav-header', NavHeader);
customElements.define('quote-panel', QuotePanel);
customElements.define('quote-cell', QuoteCell);
customElements.define('notice-bar', NoticeBar);
customElements.define('period-tabs', PeriodTabs);
customElements.define('indicator-bar', IndicatorBar);
customElements.define('chart-area', ChartArea);
customElements.define('price-chart', PriceChart);
customElements.define('volume-bar', VolumeBar);
customElements.define('volume-chart', VolumeChart);
customElements.define('promo-banner', PromoBanner);
customElements.define('section-tabs', SectionTabs);
customElements.define('tab-item', TabItem);
customElements.define('card-row', CardRow);
customElements.define('info-card', InfoCard);
customElements.define('vote-bar', VoteBar);
customElements.define('trade-bar', TradeBar);
customElements.define('system-nav', SystemNav);
customElements.define('arrow-mark', ArrowMark);
// Measures its text, so it comes after every element that styles it
customElements.define('fit-text', FitText);
</script>
</body>
</html>
